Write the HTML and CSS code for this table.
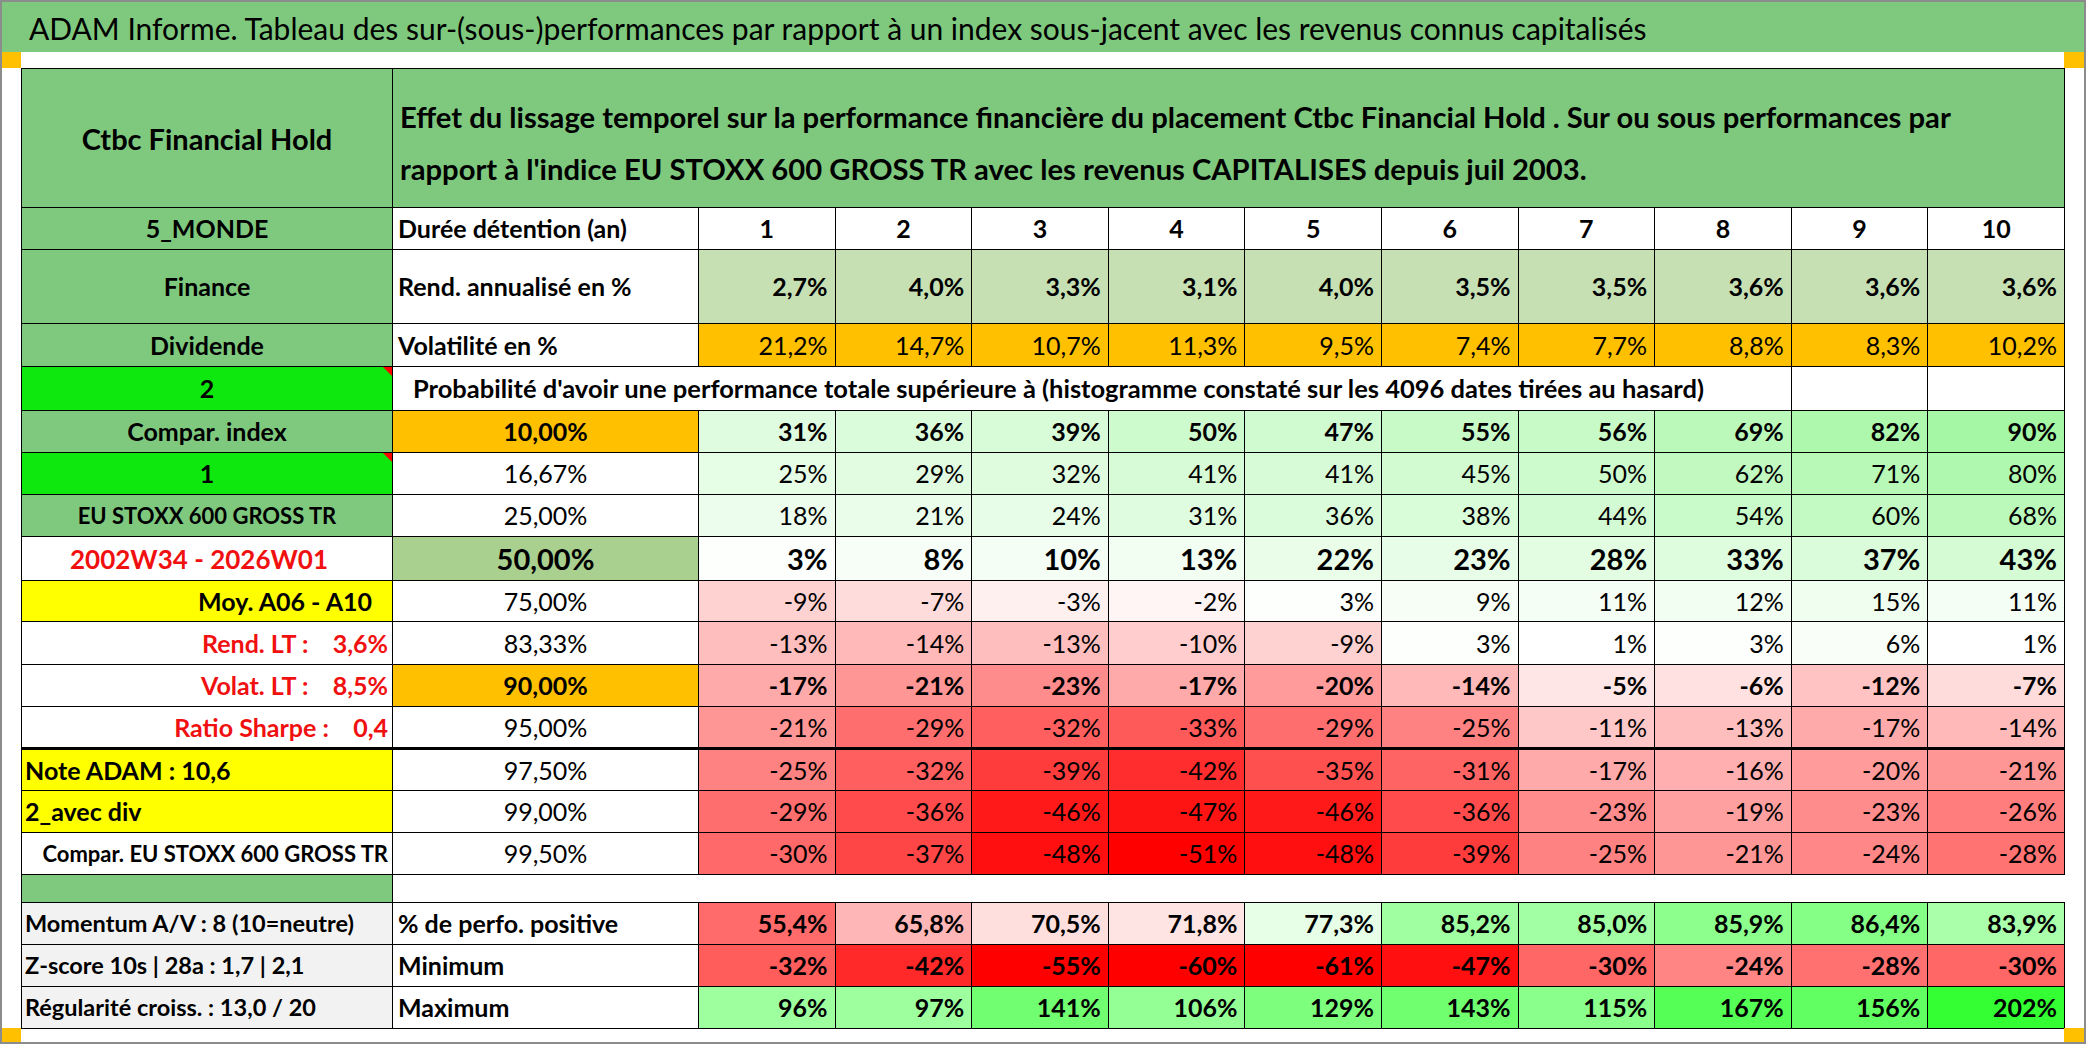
FILE: index.html
```html
<!DOCTYPE html>
<html lang="fr">
<head>
<meta charset="utf-8">
<title>ADAM Informe</title>
<link rel="stylesheet" href="styles.css">
</head>
<body>
<div class="sheet">
  <div class="title">ADAM Informe. Tableau des sur-(sous-)performances par rapport à un index sous-jacent avec les revenus connus capitalisés</div>
  <span class="corner c-tl"></span><span class="corner c-tr"></span>
  <span class="corner c-bl"></span><span class="corner c-br"></span>
  <div class="wrap">
    <table class="grid">
      <colgroup><col class="c-label"><col class="c-desc"><col span="10" class="c-num"></colgroup>
      <tr class="r-head">
        <td class="lbl green big center">Ctbc Financial Hold</td>
        <td colspan="11" class="green head-text">Effet du lissage temporel sur la performance financière du placement Ctbc Financial Hold . Sur ou sous performances par<br>rapport à l'indice EU STOXX 600 GROSS TR avec les revenus CAPITALISES depuis juil 2003.</td>
      </tr>
      <tr class="r42">
        <td class="lbl green center">5_MONDE</td>
        <td class="desc">Durée détention (an)</td>
        <td class="nh">1</td><td class="nh">2</td><td class="nh">3</td><td class="nh">4</td><td class="nh">5</td><td class="nh">6</td><td class="nh">7</td><td class="nh">8</td><td class="nh">9</td><td class="nh">10</td>
      </tr>
      <tr class="r74">
        <td class="lbl green center">Finance</td>
        <td class="desc">Rend. annualisé en %</td>
        <td class="v b fin">2,7%</td><td class="v b fin">4,0%</td><td class="v b fin">3,3%</td><td class="v b fin">3,1%</td><td class="v b fin">4,0%</td><td class="v b fin">3,5%</td><td class="v b fin">3,5%</td><td class="v b fin">3,6%</td><td class="v b fin">3,6%</td><td class="v b fin">3,6%</td>
      </tr>
      <tr class="r43">
        <td class="lbl green center">Dividende</td>
        <td class="desc">Volatilité en %</td>
        <td class="v orange">21,2%</td><td class="v orange">14,7%</td><td class="v orange">10,7%</td><td class="v orange">11,3%</td><td class="v orange">9,5%</td><td class="v orange">7,4%</td><td class="v orange">7,7%</td><td class="v orange">8,8%</td><td class="v orange">8,3%</td><td class="v orange">10,2%</td>
      </tr>
      <tr class="r44">
        <td class="lbl bright center marked">2<span class="tri"></span></td>
        <td colspan="9" class="prob">Probabilité d'avoir une performance totale supérieure à (histogramme constaté sur les 4096 dates tirées au hasard)</td>
        <td></td><td></td>
      </tr>
      <tr class="r42">
        <td class="lbl green center">Compar. index</td>
        <td class="pct b orange">10,00%</td>
        <td class="v b" style="background:rgb(224,252,224)">31%</td><td class="v b" style="background:rgb(219,252,219)">36%</td><td class="v b" style="background:rgb(216,252,216)">39%</td><td class="v b" style="background:rgb(205,251,205)">50%</td><td class="v b" style="background:rgb(208,251,208)">47%</td><td class="v b" style="background:rgb(200,250,200)">55%</td><td class="v b" style="background:rgb(199,250,199)">56%</td><td class="v b" style="background:rgb(186,249,186)">69%</td><td class="v b" style="background:rgb(173,248,173)">82%</td><td class="v b" style="background:rgb(165,247,165)">90%</td>
      </tr>
      <tr class="r42">
        <td class="lbl bright center marked">1<span class="tri"></span></td>
        <td class="pct">16,67%</td>
        <td class="v" style="background:rgb(230,253,230)">25%</td><td class="v" style="background:rgb(226,252,226)">29%</td><td class="v" style="background:rgb(223,252,223)">32%</td><td class="v" style="background:rgb(214,251,214)">41%</td><td class="v" style="background:rgb(214,251,214)">41%</td><td class="v" style="background:rgb(210,251,210)">45%</td><td class="v" style="background:rgb(205,251,205)">50%</td><td class="v" style="background:rgb(193,249,193)">62%</td><td class="v" style="background:rgb(184,249,184)">71%</td><td class="v" style="background:rgb(175,248,175)">80%</td>
      </tr>
      <tr class="r42">
        <td class="lbl green center small">EU STOXX 600 GROSS TR</td>
        <td class="pct">25,00%</td>
        <td class="v" style="background:rgb(237,253,237)">18%</td><td class="v" style="background:rgb(234,253,234)">21%</td><td class="v" style="background:rgb(231,253,231)">24%</td><td class="v" style="background:rgb(224,252,224)">31%</td><td class="v" style="background:rgb(219,252,219)">36%</td><td class="v" style="background:rgb(217,252,217)">38%</td><td class="v" style="background:rgb(211,251,211)">44%</td><td class="v" style="background:rgb(201,250,201)">54%</td><td class="v" style="background:rgb(195,250,195)">60%</td><td class="v" style="background:rgb(187,249,187)">68%</td>
      </tr>
      <tr class="r44">
        <td class="lbl center red period">2002W34 - 2026W01</td>
        <td class="pct b large mid-green">50,00%</td>
        <td class="v b large" style="background:rgb(252,255,252)">3%</td><td class="v b large" style="background:rgb(247,254,247)">8%</td><td class="v b large" style="background:rgb(245,254,245)">10%</td><td class="v b large" style="background:rgb(242,254,242)">13%</td><td class="v b large" style="background:rgb(233,253,233)">22%</td><td class="v b large" style="background:rgb(232,253,232)">23%</td><td class="v b large" style="background:rgb(227,253,227)">28%</td><td class="v b large" style="background:rgb(222,252,222)">33%</td><td class="v b large" style="background:rgb(218,252,218)">37%</td><td class="v b large" style="background:rgb(212,251,212)">43%</td>
      </tr>
      <tr class="r41">
        <td class="lbl yellow right pad-r">Moy. A06 - A10</td>
        <td class="pct">75,00%</td>
        <td class="v" style="background:rgb(255,210,210)">-9%</td><td class="v" style="background:rgb(255,220,220)">-7%</td><td class="v" style="background:rgb(255,240,240)">-3%</td><td class="v" style="background:rgb(255,245,245)">-2%</td><td class="v" style="background:rgb(252,255,252)">3%</td><td class="v" style="background:rgb(246,254,246)">9%</td><td class="v" style="background:rgb(244,254,244)">11%</td><td class="v" style="background:rgb(243,254,243)">12%</td><td class="v" style="background:rgb(240,254,240)">15%</td><td class="v" style="background:rgb(244,254,244)">11%</td>
      </tr>
      <tr class="r43">
        <td class="lbl right red pre">Rend. LT :    3,6%</td>
        <td class="pct">83,33%</td>
        <td class="v" style="background:rgb(255,190,190)">-13%</td><td class="v" style="background:rgb(255,185,185)">-14%</td><td class="v" style="background:rgb(255,190,190)">-13%</td><td class="v" style="background:rgb(255,205,205)">-10%</td><td class="v" style="background:rgb(255,210,210)">-9%</td><td class="v" style="background:rgb(252,255,252)">3%</td><td class="v" style="background:rgb(254,255,254)">1%</td><td class="v" style="background:rgb(252,255,252)">3%</td><td class="v" style="background:rgb(249,254,249)">6%</td><td class="v" style="background:rgb(254,255,254)">1%</td>
      </tr>
      <tr class="r42">
        <td class="lbl right red pre">Volat. LT :    8,5%</td>
        <td class="pct b orange">90,00%</td>
        <td class="v b" style="background:rgb(255,170,170)">-17%</td><td class="v b" style="background:rgb(255,150,150)">-21%</td><td class="v b" style="background:rgb(255,140,140)">-23%</td><td class="v b" style="background:rgb(255,170,170)">-17%</td><td class="v b" style="background:rgb(255,155,155)">-20%</td><td class="v b" style="background:rgb(255,185,185)">-14%</td><td class="v b" style="background:rgb(255,230,230)">-5%</td><td class="v b" style="background:rgb(255,225,225)">-6%</td><td class="v b" style="background:rgb(255,195,195)">-12%</td><td class="v b" style="background:rgb(255,220,220)">-7%</td>
      </tr>
      <tr class="r42 thick">
        <td class="lbl right red pre">Ratio Sharpe :    0,4</td>
        <td class="pct">95,00%</td>
        <td class="v" style="background:rgb(255,150,150)">-21%</td><td class="v" style="background:rgb(255,110,110)">-29%</td><td class="v" style="background:rgb(255,95,95)">-32%</td><td class="v" style="background:rgb(255,90,90)">-33%</td><td class="v" style="background:rgb(255,110,110)">-29%</td><td class="v" style="background:rgb(255,130,130)">-25%</td><td class="v" style="background:rgb(255,200,200)">-11%</td><td class="v" style="background:rgb(255,190,190)">-13%</td><td class="v" style="background:rgb(255,170,170)">-17%</td><td class="v" style="background:rgb(255,185,185)">-14%</td>
      </tr>
      <tr class="r42">
        <td class="lbl yellow left tight">Note ADAM : 10,6</td>
        <td class="pct">97,50%</td>
        <td class="v" style="background:rgb(255,130,130)">-25%</td><td class="v" style="background:rgb(255,95,95)">-32%</td><td class="v" style="background:rgb(255,60,60)">-39%</td><td class="v" style="background:rgb(255,45,45)">-42%</td><td class="v" style="background:rgb(255,80,80)">-35%</td><td class="v" style="background:rgb(255,100,100)">-31%</td><td class="v" style="background:rgb(255,170,170)">-17%</td><td class="v" style="background:rgb(255,175,175)">-16%</td><td class="v" style="background:rgb(255,155,155)">-20%</td><td class="v" style="background:rgb(255,150,150)">-21%</td>
      </tr>
      <tr class="r42">
        <td class="lbl yellow left tight">2_avec div</td>
        <td class="pct">99,00%</td>
        <td class="v" style="background:rgb(255,110,110)">-29%</td><td class="v" style="background:rgb(255,75,75)">-36%</td><td class="v" style="background:rgb(255,25,25)">-46%</td><td class="v" style="background:rgb(255,20,20)">-47%</td><td class="v" style="background:rgb(255,25,25)">-46%</td><td class="v" style="background:rgb(255,75,75)">-36%</td><td class="v" style="background:rgb(255,140,140)">-23%</td><td class="v" style="background:rgb(255,160,160)">-19%</td><td class="v" style="background:rgb(255,140,140)">-23%</td><td class="v" style="background:rgb(255,125,125)">-26%</td>
      </tr>
      <tr class="r42">
        <td class="lbl right compar">Compar. EU STOXX 600 GROSS TR</td>
        <td class="pct">99,50%</td>
        <td class="v" style="background:rgb(255,105,105)">-30%</td><td class="v" style="background:rgb(255,70,70)">-37%</td><td class="v" style="background:rgb(255,15,15)">-48%</td><td class="v" style="background:rgb(255,0,0)">-51%</td><td class="v" style="background:rgb(255,15,15)">-48%</td><td class="v" style="background:rgb(255,60,60)">-39%</td><td class="v" style="background:rgb(255,130,130)">-25%</td><td class="v" style="background:rgb(255,150,150)">-21%</td><td class="v" style="background:rgb(255,135,135)">-24%</td><td class="v" style="background:rgb(255,115,115)">-28%</td>
      </tr>
      <tr class="r28 spacer">
        <td class="green"></td>
        <td colspan="11" class="blank"></td>
      </tr>
      <tr class="r42">
        <td class="lbl grey left small2 tight">Momentum A/V : 8 (10=neutre)</td>
        <td class="desc">% de perfo. positive</td>
        <td class="v b" style="background:rgb(255,107,107)">55,4%</td><td class="v b" style="background:rgb(255,182,182)">65,8%</td><td class="v b" style="background:rgb(255,222,222)">70,5%</td><td class="v b" style="background:rgb(255,228,228)">71,8%</td><td class="v b" style="background:rgb(230,255,230)">77,3%</td><td class="v b" style="background:rgb(160,255,160)">85,2%</td><td class="v b" style="background:rgb(163,255,163)">85,0%</td><td class="v b" style="background:rgb(140,255,140)">85,9%</td><td class="v b" style="background:rgb(134,255,134)">86,4%</td><td class="v b" style="background:rgb(170,255,170)">83,9%</td>
      </tr>
      <tr class="r42">
        <td class="lbl grey left small2 tight">Z-score 10s | 28a : 1,7 | 2,1</td>
        <td class="desc">Minimum</td>
        <td class="v b" style="background:rgb(255,92,92)">-32%</td><td class="v b" style="background:rgb(255,41,41)">-42%</td><td class="v b" style="background:rgb(255,0,0)">-55%</td><td class="v b" style="background:rgb(255,0,0)">-60%</td><td class="v b" style="background:rgb(255,0,0)">-61%</td><td class="v b" style="background:rgb(255,15,15)">-47%</td><td class="v b" style="background:rgb(255,102,102)">-30%</td><td class="v b" style="background:rgb(255,133,133)">-24%</td><td class="v b" style="background:rgb(255,112,112)">-28%</td><td class="v b" style="background:rgb(255,102,102)">-30%</td>
      </tr>
      <tr class="r42">
        <td class="lbl grey left small2 tight">Régularité croiss. : 13,0 / 20</td>
        <td class="desc">Maximum</td>
        <td class="v b" style="background:rgb(158,255,158)">96%</td><td class="v b" style="background:rgb(157,255,157)">97%</td><td class="v b" style="background:rgb(113,255,113)">141%</td><td class="v b" style="background:rgb(148,255,148)">106%</td><td class="v b" style="background:rgb(125,255,125)">129%</td><td class="v b" style="background:rgb(111,255,111)">143%</td><td class="v b" style="background:rgb(139,255,139)">115%</td><td class="v b" style="background:rgb(86,255,86)">167%</td><td class="v b" style="background:rgb(97,255,97)">156%</td><td class="v b" style="background:rgb(51,255,51)">202%</td>
      </tr>
    </table>
  </div>
</div>
</body>
</html>
```
FILE: styles.css
```css
html, body {
  margin: 0;
  padding: 0;
  background: #ffffff;
}

body {
  font-family: Lato, "Liberation Sans", sans-serif;
  color: #000;
}

.sheet {
  position: relative;
  width: 2086px;
  height: 1044px;
  box-sizing: border-box;
  border: 2px solid #8c8c8c;
  overflow: hidden;
  background: #fff;
}

.title {
  height: 50px;
  line-height: 52px;
  background: #7fc97f;
  font-size: 30px;
  padding-left: 27px;
  white-space: nowrap;
}

.corner {
  position: absolute;
  width: 19px;
  height: 16px;
  background: #ffc000;
}
.c-tl { left: 0; top: 50px; }
.c-tr { right: 0; top: 50px; width: 20px; }
.c-bl { left: 0; bottom: 0; height: 14px; }
.c-br { right: 0; bottom: 0; width: 20px; height: 14px; }

.wrap {
  padding: 16px 0 0 19px;
}

.grid {
  border-collapse: collapse;
  table-layout: fixed;
  width: 2043px;
}

.c-label { width: 371px; }
.c-desc { width: 306px; }
.c-num { width: 136.6px; }

.grid td {
  border: 1px solid #000;
  padding: 0 6px;
  white-space: nowrap;
  overflow: hidden;
  vertical-align: middle;
  font-size: 25px;
  line-height: 1;
  background: #fff;
}

.r-head { height: 139px; }
.r74 { height: 74px; }
.r44 { height: 44px; }
.r43 { height: 43px; }
.r42 { height: 42px; }
.r41 { height: 41px; }
.r28 { height: 28px; }

.grid .thick td { border-bottom: 3px solid #000; }

.grid td.green { background: #7fc97f; }
.grid td.bright { background: #0ee80e; }
.grid td.yellow { background: #ffff00; }
.grid td.grey { background: #f2f2f2; }
.grid td.orange { background: #ffc000; }
.grid td.fin { background: #c6e0b4; }
.grid td.mid-green { background: #a9d08e; }

.lbl { font-weight: 700; }
.grid td.big { font-size: 29px; }
.grid td.small { font-size: 22px; }
.grid td.small2 { font-size: 23.5px; }
.grid td.compar { font-size: 22px; padding-right: 4px; }
.grid td.large { font-size: 29px; }
.grid td.period { font-size: 26px; padding-right: 22px; }

.center { text-align: center; }
.right { text-align: right; }
.left { text-align: left; }
.grid td.pad-r { padding-right: 20px; }
.grid td.tight { padding-left: 3px; }
.grid td.pre { white-space: pre; padding-right: 4px; }
.red { color: #f01010; }

.marked { position: relative; }
.tri {
  position: absolute;
  top: 0;
  right: 0;
  width: 0;
  height: 0;
  border-top: 9px solid #ff0000;
  border-left: 9px solid transparent;
}

.grid td.head-text {
  font-weight: 700;
  font-size: 29.2px;
  line-height: 52px;
  padding-left: 7px;
  padding-top: 10px;
}

.grid td.desc {
  font-weight: 700;
  text-align: left;
  padding-left: 5px;
}

.grid td.nh {
  font-weight: 700;
  text-align: center;
}

.grid td.v {
  text-align: right;
  padding-right: 7px;
}

.grid td.pct {
  text-align: center;
}

.b { font-weight: 700; }

.grid td.prob {
  font-weight: 700;
  font-size: 25.5px;
  padding-left: 20px;
  border-right: 1px solid #000;
}

.spacer td.blank {
  border: none;
  border-top: 1px solid #000;
  border-bottom: 1px solid #000;
  border-right: none;
}
```
